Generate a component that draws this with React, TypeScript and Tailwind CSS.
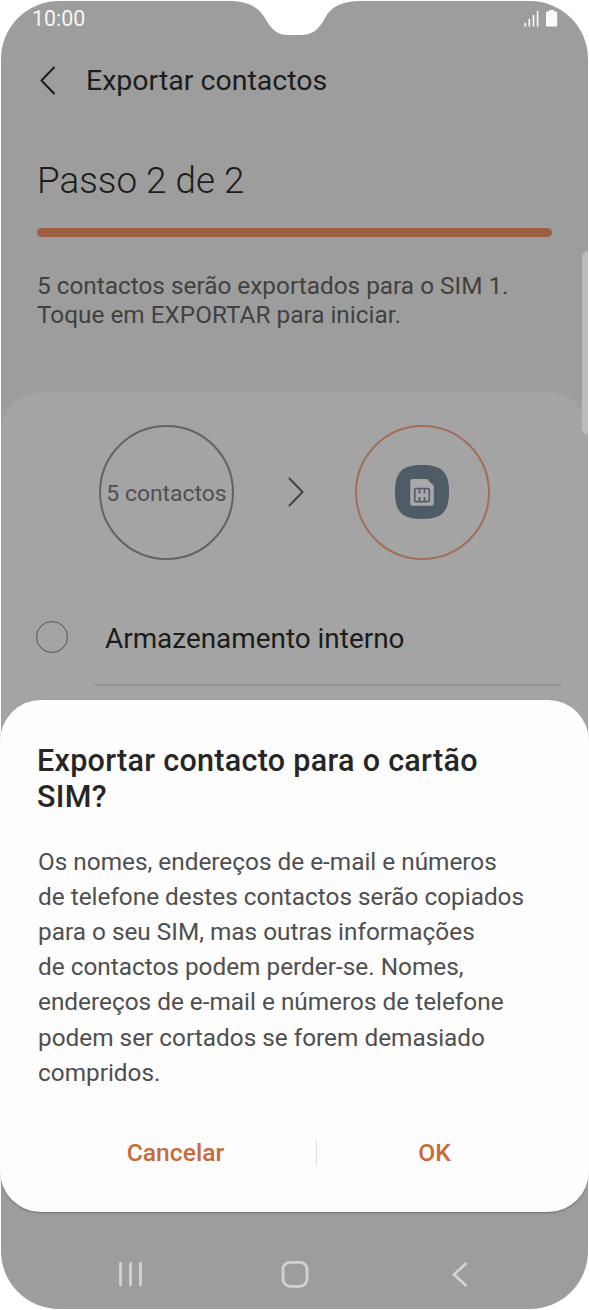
import React from "react";

const K_EXPORT_MESSAGE = [
  "Os nomes, endereços de e-mail e números",
  "de telefone destes contactos serão copiados",
  "para o seu SIM, mas outras informações",
  "de contactos podem perder-se. Nomes,",
  "endereços de e-mail e números de telefone",
  "podem ser cortados se forem demasiado",
  "compridos.",
]

function Notch(){
  return (
    <svg className="absolute left-[230px] top-0" width="130" height="37" viewBox="0 0 130 37">
      <path d="M0 0V1C16 1 28 6 35 18C41 29 47 35 58 35H70C83 35 89 29 95 18C101 6 114 1 130 1V0Z" fill="#fff"/>
    </svg>
  )
}

function StatusBar(){
  return (
    <div className="flex h-10 items-start justify-between pl-[31px] pr-[30px] pt-[5px]">
      <span className="text-[21.4px] leading-[26px] text-[#f5f5f5]">10:00</span>
      <svg className="mt-[3px]" width="34" height="18" viewBox="0 0 34 18" fill="#fafafa">
        <rect x="0.5" y="14" width="1.6" height="3.5"/>
        <rect x="4.5" y="10" width="1.6" height="7.5"/>
        <rect x="8.7" y="6" width="1.6" height="11.5"/>
        <rect x="12.8" y="2" width="1.6" height="15.5"/>
        <path d="M25 1h5v1.6h2.200q1 0 1 1V16.500q0 1-1 1H23q-1 0-1-1V3.600q0-1 1-1h2Z"/>
      </svg>
    </div>
  )
}

function SimIcon(){
  return (
    <svg className="mb-0.5 mr-px" width="54" height="54" viewBox="0 0 54 54">
      <path d="M27 0C47 0 54 7 54 27S47 54 27 54S0 47 0 27S7 0 27 0Z" fill="#4f5b67"/>
      <path d="M17.500 14H32L38.800 20.800V38.500Q38.800 40.700 36.600 40.700H17.500Q15.300 40.700 15.300 38.500V16.200Q15.300 14 17.500 14Z" fill="#a8a8a8"/>
      <g fill="none" stroke="#4f5b67" strokeWidth="1.700">
        <rect x="19.700" y="23.500" width="14.600" height="13.200" rx="1.500"/>
        <path d="M24.500 23.500v5M29.500 23.500v5M24.500 32v5M29.500 32v5"/>
      </g>
    </svg>
  )
}

function TransferCard(){
  return (
    <div className="h-[400px] rounded-t-[40px] bg-[#a4a4a4] pt-[33px]">
      <div className="flex items-center pl-[98px]">
        <div className="flex size-[135px] items-center justify-center rounded-full border-2 border-[#636363]">
          <span className="mt-[3px] whitespace-nowrap text-[22.9px] text-[#505050]">5 contactos</span>
        </div>
        <svg className="mb-px ml-[53px]" width="18" height="32" viewBox="0 0 18 32" fill="none" stroke="#454545" strokeWidth="2" strokeLinecap="round" strokeLinejoin="round">
          <path d="M2.500 2.500L15.500 16L2.500 29.500"/>
        </svg>
        <div className="ml-[50px] flex size-[135px] items-center justify-center rounded-full border-2 border-[#9f6f57]">
          <SimIcon />
        </div>
      </div>
      <div className="mt-[60px] flex items-center pl-[35px]">
        <div className="mb-px size-8 rounded-full border border-[#555]"/>
        <span className="ml-[37px] mt-[3px] text-[27.9px] leading-8 text-[#1c1c1c]">Armazenamento interno</span>
      </div>
      <div className="ml-[94px] mt-[29px] h-0.5 w-[467px] bg-[#939393]"/>
    </div>
  )
}

function ExportDialog(){
  return (
    <div className="absolute left-0 top-[700px] h-[512px] w-[589px] rounded-[41px] bg-[#fdfdfd] px-[37px] pt-[43px] shadow-[0_1px_2px_rgba(0,0,0,0.3)]">
      <h2 className="whitespace-nowrap text-[30.500px] font-medium leading-9 tracking-[0.3px] text-[#262626]">Exportar contacto para o cartão<br/>SIM?</h2>
      <div className="ml-px mt-[28.500px] whitespace-nowrap text-[24.350px] leading-[35.200px] text-[#4f4f4f]">
        {K_EXPORT_MESSAGE.map((line, index) => <p key={index}>{line}</p>)}
      </div>
      <div className="mt-[50px] flex h-[26px] items-center text-[24.700px] font-medium text-[#c96a38]">
        <button className="w-[279px] pr-0.5">Cancelar</button>
        <div className="h-6 w-px bg-[#dedede]"/>
        <button className="w-[235px]">OK</button>
      </div>
    </div>
  )
}

function NavBar(){
  return (
    <div className="absolute left-0 top-[1260px] flex h-7 w-full items-center pl-[118px]">
      <svg width="25" height="26" viewBox="0 0 25 26" fill="none" stroke="#d2d2d2" strokeWidth="2.800" strokeLinecap="round">
        <path d="M2.500 2.300V24M12.500 2.300V24M22.500 2.300V24"/>
      </svg>
      <svg className="ml-[138px]" width="28" height="28" viewBox="0 0 28 28" fill="none" stroke="#d2d2d2" strokeWidth="2.800">
        <rect x="2" y="2.300" width="24" height="24" rx="7"/>
      </svg>
      <svg className="ml-[142px]" width="18" height="28" viewBox="0 0 18 28" fill="none" stroke="#d2d2d2" strokeWidth="2.800">
        <path d="M15.500 3L3 14.500L15.500 26"/>
      </svg>
    </div>
  )
}

export default function App(){
  return (
    <div className="relative h-[1310px] w-[589px] overflow-hidden bg-white pt-px font-['Roboto',sans-serif]">
      <div className="mx-px h-[1308px] overflow-hidden rounded-[58px] bg-[#9d9d9d]">
        <StatusBar />
        <div className="flex h-20 items-center pl-[38px]">
          <svg width="18" height="30" viewBox="0 0 18 30" fill="none" stroke="#1c1c1c" strokeWidth="2" strokeLinecap="round" strokeLinejoin="round">
            <path d="M15 1.500L2.500 14.500L15 27.500"/>
          </svg>
          <h1 className="ml-[29px] text-[28.500px] text-[#1c1c1c]">Exportar contactos</h1>
        </div>
        <div className="px-9 pt-[38px]">
          <h2 className="text-[36.800px] font-light leading-[44px] text-[#1c1c1c]">Passo 2 de 2</h2>
          <div className="mt-[25px] h-[9px] w-[515px] rounded-full bg-[#9d5d40]"/>
          <p className="mt-[35px] whitespace-nowrap text-[24.350px] leading-[28.700px] text-[#414141]">
            5 contactos serão exportados para o SIM 1.<br/>
            Toque em EXPORTAR para iniciar.
          </p>
        </div>
        <div className="mt-[62.600px]">
          <TransferCard />
        </div>
      </div>
      <Notch />
      <div className="absolute left-[582px] top-[251px] h-[184px] w-1.5 rounded-l-md bg-[#bcbcbc]"/>
      <ExportDialog />
      <NavBar />
    </div>
  )
}
